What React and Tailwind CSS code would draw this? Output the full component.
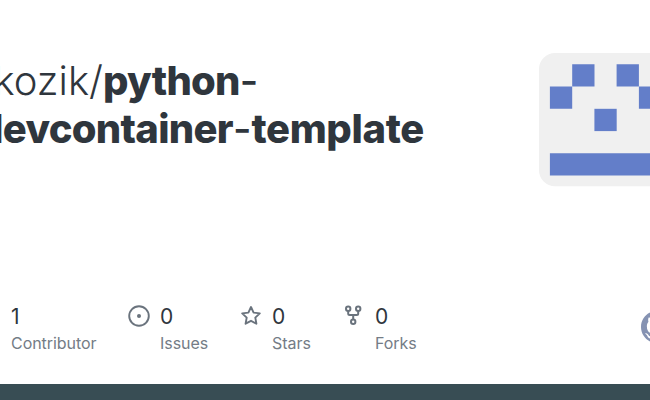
import React from 'react';

const STATS = [
  { label: 'Contributor', value: 1, width: 'w-[149px]', icon: null },
  { label: 'Issues', value: 0, width: 'w-[112px]', icon: 'issue' },
  { label: 'Stars', value: 0, width: 'w-[103px]', icon: 'star' },
  { label: 'Forks', value: 0, width: 'w-[80px]', icon: 'fork' },
];

function StatIcon({ name }) {
  if (name === 'issue') {
    return (
      <svg className="size-6" viewBox="0 0 24 24" fill="none" stroke="currentColor" strokeWidth="1.9">
        <circle cx="12" cy="12" r="9.8" />
        <circle cx="12" cy="12" r="2" fill="currentColor" stroke="none" />
      </svg>
    );
  }
  if (name === 'star') {
    return (
      <svg className="size-6" viewBox="0 0 24 24" fill="none" stroke="currentColor" strokeWidth="1.9" strokeLinejoin="round">
        <path d="M12 3l2.6 5.6 6.2.8-4.5 4.2 1.1 6.1L12 16.8l-5.4 2.9 1.1-6.1-4.5-4.2 6.2-.8z" />
      </svg>
    );
  }
  if (name === 'fork') {
    return (
      <svg className="size-6" viewBox="0 0 24 24" fill="none" stroke="currentColor" strokeWidth="2">
        <circle cx="6.2" cy="4.8" r="2.2" />
        <circle cx="16.2" cy="4.8" r="2.2" />
        <circle cx="11.2" cy="17.8" r="2.2" />
        <path d="M6.2 7v2.6c0 .9.6 1.5 1.5 1.5h7c.9 0 1.5-.6 1.5-1.5V7M11.2 11.1v4.5" />
      </svg>
    );
  }
  return null;
}

function Stat({ label, value, width, icon }) {
  return (
    <div className={`flex shrink-0 ${width}`}>
      <div className="-ml-[34px] mt-px w-[34px] shrink-0 pl-[0.7px] text-[#6a737d]">
        <StatIcon name={icon} />
      </div>
      <div>
        <p className="pt-px text-[21px] leading-[26px] text-[#2f363d]">{value}</p>
        <p className="-mt-px text-[16px] leading-7 tracking-[-0.05px] whitespace-nowrap text-[#747c86]">{label}</p>
      </div>
    </div>
  );
}

function Identicon() {
  return (
    <svg className="h-[134px] w-[134px] shrink-0" viewBox="0 0 134 134">
      <rect width="134" height="133.3" rx="16" fill="#f0f0f0" />
      <g fill="#637ec9">
        <path d="M33.2 11.2h22.3v22.3H33.2zM77.6 11.2h22.3v22.3H77.6z" />
        <path d="M10.9 33.5h22.3v22.3H10.9zM99.9 33.5h22.3v22.3H99.9z" />
        <path d="M55.4 55.8h22.3v22.3H55.4z" />
        <path d="M10.9 100.2h111.5v22.3H10.9z" />
      </g>
    </svg>
  );
}

function GithubMark() {
  return (
    <svg className="h-8 w-8 shrink-0 text-[#8592b2]" viewBox="0 0 16 16" fill="currentColor">
      <path d="M8 0C3.58 0 0 3.58 0 8c0 3.54 2.29 6.53 5.47 7.59.4.07.55-.17.55-.38 0-.19-.01-.82-.01-1.49-2.01.37-2.53-.49-2.69-.94-.09-.23-.48-.94-.82-1.13-.28-.15-.68-.52-.01-.53.63-.01 1.08.58 1.23.82.72 1.21 1.87.87 2.33.66.07-.52.28-.87.51-1.07-1.78-.2-3.64-.89-3.64-3.95 0-.87.31-1.59.82-2.15-.08-.2-.36-1.02.08-2.12 0 0 .67-.21 2.2.82.64-.18 1.32-.27 2-.27s1.36.09 2 .27c1.53-1.04 2.2-.82 2.2-.82.44 1.1.16 1.92.08 2.12.51.56.82 1.27.82 2.15 0 3.07-1.87 3.75-3.65 3.95.29.25.54.73.54 1.48 0 1.07-.01 1.93-.01 2.2 0 .21.15.46.55.38A8.01 8.01 0 0 0 16 8c0-4.42-3.58-8-8-8z" />
    </svg>
  );
}

export default function App() {
  return (
    <div className="flex h-[400px] w-[650px] flex-col overflow-hidden bg-white font-['Inter','Liberation_Sans',sans-serif]">
      <main className="flex h-[303px] shrink-0 justify-between pt-[53px]">
        <h1 className="w-[460px] pt-1 text-[40px] leading-[48px] font-extrabold whitespace-nowrap text-[#2f363d]">
          <span className="-ml-[6.5px] block">
            <span className="font-light">kozik/</span>
            <span className="tracking-[-0.75px]">python</span>
            <span className="font-medium">-</span>
          </span>
          <span className="-ml-[22px] block">
            <span className="tracking-[-0.7px]">devcontainer</span>
            <span className="font-medium">-</span>
            <span className="tracking-[-0.35px]">template</span>
          </span>
        </h1>
        <div className="w-[111px] shrink-0">
          <Identicon />
        </div>
      </main>
      <footer className="flex h-[81px] shrink-0 justify-between pl-[11px]">
        <div className="flex">
          {STATS.map((stat) => (
            <Stat key={stat.label} {...stat} />
          ))}
        </div>
        <div className="w-[9px] shrink-0 pt-2">
          <GithubMark />
        </div>
      </footer>
      <div className="grow bg-[#384d54]" />
    </div>
  );
}
